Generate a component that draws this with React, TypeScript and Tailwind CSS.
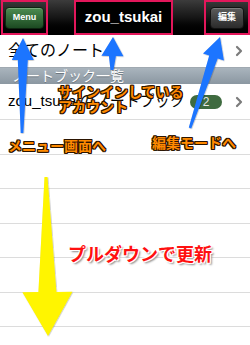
import React from 'react';

const jp = "font-['Liberation_Sans','Noto_Sans_CJK_JP',sans-serif]";

// tapered arrow: tip, tail, head length, head half-width, shaft half-width at head / at tail
function arrowPoints(
    tip: [number, number],
    tail: [number, number],
    headLen: number,
    headHalf: number,
    shaftHalf: number,
    tailHalf: number
) {
    const dx = tail[0] - tip[0];
    const dy = tail[1] - tip[1];
    const len = Math.hypot(dx, dy);
    const ux = dx / len;
    const uy = dy / len;
    const nx = -uy;
    const ny = ux;
    const bx = tip[0] + ux * headLen;
    const by = tip[1] + uy * headLen;
    const pts = [
        [tip[0], tip[1]],
        [bx + nx * headHalf, by + ny * headHalf],
        [bx + nx * shaftHalf, by + ny * shaftHalf],
        [tail[0] + nx * tailHalf, tail[1] + ny * tailHalf],
        [tail[0] - nx * tailHalf, tail[1] - ny * tailHalf],
        [bx - nx * shaftHalf, by - ny * shaftHalf],
        [bx - nx * headHalf, by - ny * headHalf],
    ];
    return pts.map((p) => `${p[0].toFixed(1)},${p[1].toFixed(1)}`).join(' ');
}

function Chevron() {
    return (
        <svg width="8" height="12" viewBox="0 0 8 12" className="shrink-0">
            <polyline points="2,2 6,6 2,10" fill="none" stroke="#7b7b7b" strokeWidth="2.2" strokeLinecap="round" strokeLinejoin="round" />
        </svg>
    );
}

const orange =
    "absolute font-bold text-[14px] leading-[15px] text-[#ff8a00] [text-shadow:1px_1px_0_#2b1400,-1px_-1px_0_#2b1400,1px_-1px_0_#2b1400,-1px_1px_0_#2b1400,0_1px_0_#2b1400,0_-1px_0_#2b1400,1px_0_0_#2b1400,-1px_0_0_#2b1400]";

export default function App() {
    return (
        <div className={`relative w-[250px] h-[345px] overflow-hidden bg-white ${jp}`}>
            {/* Nav bar */}
            <div className="flex h-[35px] bg-gradient-to-b from-[#3c3c3c] via-[#161616] to-black">
                <div className="ml-[1px] w-[47px] border-2 border-[#e3175b] flex items-center justify-center">
                    <div className="w-[39px] h-[22px] rounded-[4px] border border-[#0d2410] bg-gradient-to-b from-[#4d8d52] to-[#1c4a22] flex items-center justify-center text-white text-[9px] font-bold shadow-[inset_0_1px_0_rgba(255,255,255,0.25)]">
                        Menu
                    </div>
                </div>
                <div className="ml-[26px] w-[99px] border-2 border-[#e3175b] bg-black flex items-center justify-center text-white text-[15px] font-bold">
                    zou_tsukai
                </div>
                <div className="ml-[31px] w-[46px] border-2 border-[#e3175b] flex items-center justify-center">
                    <div className="w-[34px] h-[22px] rounded-[4px] border border-[#111] bg-gradient-to-b from-[#5c5c5c] to-[#2b2b2b] flex items-center justify-center text-white text-[9px] font-bold shadow-[inset_0_1px_0_rgba(255,255,255,0.2)]">
                        編集
                    </div>
                </div>
            </div>

            {/* All notes */}
            <div className="h-[32px] flex items-center justify-between pl-[8px] pr-[7px]">
                <span className="text-[16px] text-black">全てのノート</span>
                <Chevron />
            </div>

            {/* Section header */}
            <div className="h-[17px] flex items-center pl-[12px] bg-gradient-to-b from-[#a9b4bd] to-[#8b97a1] border-t border-[#a0a9b1]">
                <span className="text-[14px] leading-none text-white [text-shadow:0_1px_0_#6d7780]">ノートブック一覧</span>
            </div>

            {/* Notebook row */}
            <div className="h-[36px] flex items-center pl-[8px] pr-[7px] border-b border-[#dcdcdc]">
                <span className="text-[15px] text-black flex-1">zou_tsukaiのノートブック</span>
                <span className="w-[32px] h-[14px] mr-[13px] rounded-full bg-[#3f6b40] text-[#e6e6e6] text-[12px] leading-none flex items-center justify-center">2</span>
                <Chevron />
            </div>

            {/* empty rows */}
            {[0, 1, 2, 3, 4, 5].map((i) => (
                <div key={i} className="h-[34.5px] border-b border-[#dcdcdc]" />
            ))}

            {/* annotations */}
            <svg className="absolute inset-0 pointer-events-none" width="250" height="345" viewBox="0 0 250 345">
                <defs>
                    <filter id="sh" x="-20%" y="-20%" width="140%" height="140%">
                        <feDropShadow dx="0.5" dy="0.5" stdDeviation="0.6" floodColor="#000" floodOpacity="0.35" />
                    </filter>
                </defs>
                <polygon points={arrowPoints([23, 38], [22, 133], 22, 11, 5, 1.3)} fill="#1f74ff" filter="url(#sh)" />
                <polygon points={arrowPoints([113, 37], [112, 70], 19, 11, 3.5, 1.5)} fill="#1f74ff" filter="url(#sh)" />
                <polygon points={arrowPoints([220, 37], [190, 128], 21, 11, 4.5, 1.3)} fill="#1f74ff" filter="url(#sh)" />
                <polygon points={arrowPoints([48, 336], [46, 177], 44, 25, 9, 1.5)} fill="#fff500" filter="url(#sh)" />
            </svg>

            <div className={`${orange} left-[58px] top-[85px]`}>
                サインインしている
                <br />
                アカウント
            </div>
            <div className={`${orange} left-[8px] top-[139px]`}>メニュー画面へ</div>
            <div className={`${orange} left-[152px] top-[136px]`}>編集モードへ</div>
            <div className="absolute left-[68px] top-[246px] font-bold text-[18px] leading-[19px] text-[#ff1010] [text-shadow:1px_1px_0_#fff,-1px_-1px_0_#fff,1px_-1px_0_#fff,-1px_1px_0_#fff,2px_2px_2px_#888]">
                プルダウンで更新
            </div>
        </div>
    );
}
